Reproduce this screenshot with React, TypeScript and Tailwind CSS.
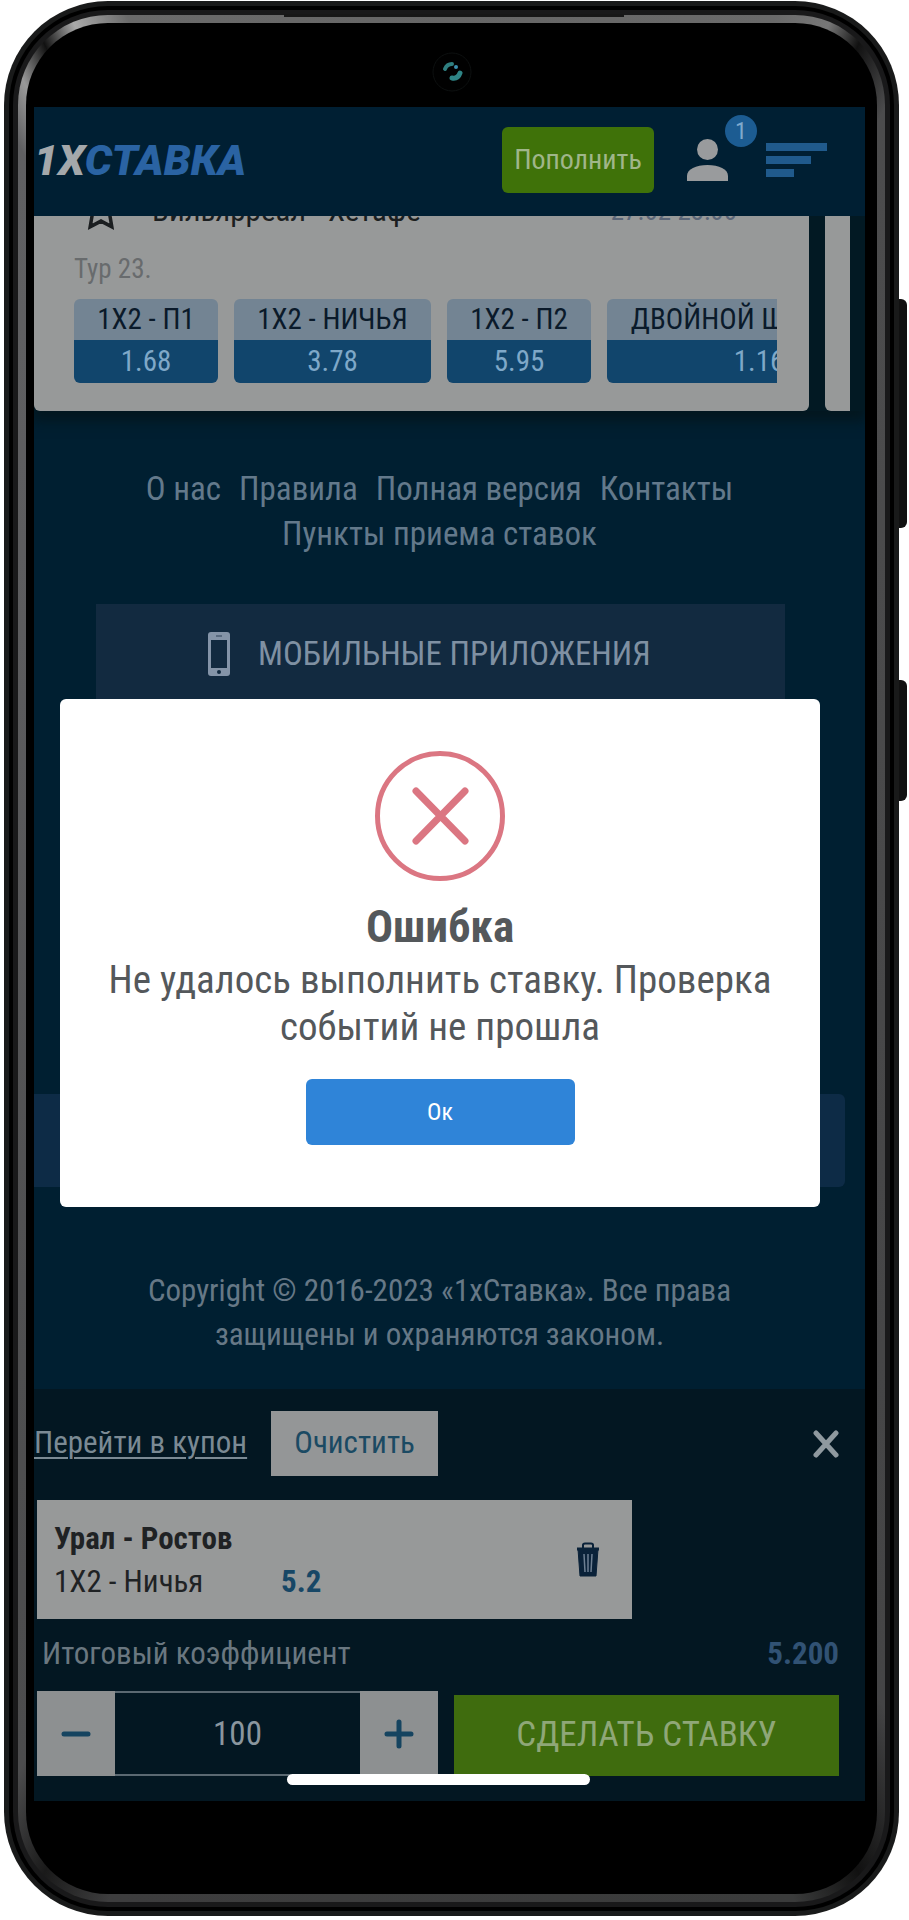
import type { ReactNode } from 'react';

interface Odd {
  label: string;
  value: string;
  className: string;
}

const ODDS: Odd[] = [
  { label: '1X2 - П1', value: '1.68', className: 'w-36' },
  { label: '1X2 - НИЧЬЯ', value: '3.78', className: 'w-[197px]' },
  { label: '1X2 - П2', value: '5.95', className: 'w-36' },
  { label: 'ДВОЙНОЙ ШАНС - 1X', value: '1.16', className: 'w-[304px]' },
];

const LINKS = ['О нас', 'Правила', 'Полная версия', 'Контакты', 'Пункты приема ставок'];

function Phone({ children }: { children: ReactNode }) {
  return (
    <div className="relative pl-1 pr-[10px] pt-px pb-[2px]">
      <div className="absolute right-[2px] top-[299px] h-[229px] w-4 rounded-r-md bg-[#111111]" />
      <div className="absolute right-[2px] top-[680px] h-[121px] w-4 rounded-r-md bg-[#111111]" />
      <div className="relative rounded-[104px] bg-[#191a1a] p-[5px]">
        <div className="rounded-[99px] bg-black p-1">
          <div className="rounded-[95px] bg-[#19191a] p-[5px]">
            <div className="rounded-[90px] bg-[conic-gradient(#666_0deg,#6a6a6a_19deg,#777_22deg,#111_24deg,#4c4c4d_27deg,#454546_150deg,#111_156deg,#3a3b3b_160deg,#3d3d3e_200deg,#1a1a1a_204deg,#4c4c4d_208deg,#606062_332deg,#999_334deg,#111_336deg,#aaa_338deg,#6a6a6a_341deg,#666_360deg)] p-2">
              <div className="rounded-[82px] bg-black pb-[93px] pl-2 pr-3">
                <div className="flex h-[84px] justify-center pl-1 pt-[29px]">
                  <Camera />
                </div>
                {children}
              </div>
            </div>
          </div>
        </div>
      </div>
      <div className="absolute left-[284px] top-[14px] h-[3px] w-[340px] bg-[#171717]" />
    </div>
  );
}

function Camera() {
  return (
    <svg width="40" height="40" viewBox="0 0 40 40">
      <circle cx="20" cy="20" r="19" fill="#010101" stroke="#0d1010" />
      <path d="M13 17q2-5 7-5" fill="none" stroke="#2f7f80" strokeWidth="4" strokeLinecap="round" />
      <path d="M20 26q6 1 8-5" fill="none" stroke="#2f8586" strokeWidth="5" strokeLinecap="round" />
      <circle cx="24" cy="15" r="2" fill="#3c8fae" />
    </svg>
  );
}

function Header() {
  return (
    <header className="relative flex h-[109px] items-center bg-[#001f33] pb-[3px] pr-[38px]">
      <a href="#" className="font-[Roboto] text-[43px] font-black italic leading-none text-[#2a63a3]">
        <span className="text-[#a4a8ab]">1X</span>СТАВКА
      </a>
      <button className="ml-auto h-[66px] w-[152px] rounded-md bg-[#3f7209] text-[28px] text-[#a0b68a]">
        Пополнить
      </button>
      <button aria-label="Профиль" className="relative ml-[33px]">
        <svg width="41" height="42" viewBox="0 0 41 42" fill="#999b9d">
          <circle cx="20.500" cy="10.500" r="10.500" />
          <path d="M0 42V37C0 30 9 26 20.500 26S41 30 41 37V42z" />
        </svg>
        <span className="absolute -top-6 left-[38px] flex h-8 w-8 items-center justify-center rounded-full bg-[#1c5c92] text-2xl text-[#7fa9cd]">
          1
        </span>
      </button>
      <button aria-label="Меню" className="ml-[38px] flex flex-col gap-[5px]">
        <span className="h-2 w-[61px] bg-[#205a8c]" />
        <span className="h-2 w-[45px] bg-[#205a8c]" />
        <span className="h-2 w-7 bg-[#205a8c]" />
      </button>
    </header>
  );
}

function Matches() {
  return (
    <section className="flex h-[195px] gap-4 overflow-hidden bg-[#021923] pr-[15px] shadow-[0_8px_12px_2px_#03171f]">
      <div className="flex min-w-0 flex-1 flex-col overflow-hidden rounded-b-md bg-[#979999] pl-10 pr-8">
        {/* this row is scrolled halfway under the header */}
        <div className="-mt-[26px] flex h-[42px] shrink-0 items-center leading-[42px] text-[#1b1e20]">
          <svg width="42" height="42" viewBox="0 0 24 24" className="ml-[6px]" fill="none" stroke="#1b1e20" strokeWidth="2">
            <path d="M12 2l3.090 6.260L22 9.270l-5 4.870 1.180 6.880L12 17.770l-6.180 3.250L7 14.140 2 9.270l6.910-1.010z" />
          </svg>
          <span className="ml-[30px] text-[31px]">Вильярреал - Хетафе</span>
          <span className="ml-auto mr-10 text-[27px] text-[#5b6678]">27.02 23:00</span>
        </div>
        <p className="mt-3 text-[27px] leading-[50px] text-[#686b6d]">Тур 23.</p>
        <div className="mt-[5px] flex gap-4 overflow-hidden text-center">
          {ODDS.map(odd => (
            <button key={odd.label} className={`shrink-0 overflow-hidden rounded-md ${odd.className}`}>
              <span className="block bg-[#738493] text-[29px] leading-[41px] text-[#0a1a2a]">{odd.label}</span>
              <span className="block bg-[#11456c] text-[29px] leading-[43px] text-[#7fa8c8]">{odd.value}</span>
            </button>
          ))}
        </div>
      </div>
      <div className="w-[25px] rounded-bl-md bg-[#979999]" />
    </section>
  );
}

function Footer() {
  return (
    <footer className="mr-5 text-center text-[#63798b]">
      <nav className="flex flex-wrap justify-center gap-x-[18px] px-20 pt-[55px] text-[33px] leading-[45px]">
        {LINKS.map(link => (
          <a key={link} href="#">
            {link}
          </a>
        ))}
      </nav>
      <a
        href="#"
        className="ml-[62px] mr-[60px] mt-12 flex h-24 items-center gap-7 bg-[#122a40] pl-28 pt-1 text-[33px] text-[#7f90a2]"
      >
        <svg width="22" height="44" viewBox="0 0 22 44">
          <rect width="22" height="44" rx="3" fill="#8494a8" />
          <rect x="3" y="8" width="16" height="28" fill="#122a40" />
          <path d="M8 4H14" stroke="#4a5d72" strokeWidth="1.500" />
          <circle cx="11" cy="40" r="2" fill="#122a40" />
        </svg>
        МОБИЛЬНЫЕ ПРИЛОЖЕНИЯ
      </a>
      <div className="mt-[394px] h-[93px] rounded-r-md bg-[#0d2b46]" />
      <p className="mt-[82px] px-24 text-[31px] leading-[44px] text-[#667886]">
        Copyright © 2016-2023 «1хСтавка». Все права защищены и охраняются законом.
      </p>
    </footer>
  );
}

function Coupon() {
  return (
    <section className="mt-8 bg-[#031722] pb-[25px] pr-[26px] pt-[22px]">
      <div className="flex items-center">
        <a href="#" className="text-[31px] text-[#7b8a94] underline decoration-2 underline-offset-4">
          Перейти в купон
        </a>
        <button className="ml-6 h-[65px] w-[167px] bg-[#949697] text-[31px] text-[#1b4a63]">Очистить</button>
        <button aria-label="Закрыть" className="ml-auto">
          <svg width="26" height="28" viewBox="0 0 26 28" stroke="#8f999f" strokeWidth="5" strokeLinecap="round">
            <path d="M3 3L23 25M23 3L3 25" />
          </svg>
        </button>
      </div>
      <div className="ml-[3px] mt-6 flex h-[119px] w-[595px] items-center bg-[#979999] pl-[17px] pr-8">
        <div className="text-[31px] leading-[43px] text-[#1f2224]">
          <p className="font-bold">Урал - Ростов</p>
          <p className="flex">
            <span className="w-[227px]">1X2 - Ничья</span>
            <span className="font-bold text-[#174766]">5.2</span>
          </p>
        </div>
        <button aria-label="Удалить" className="ml-auto">
          <svg width="24" height="36" viewBox="0 0 24 36" fill="none" stroke="#0a2239">
            <path d="M7 6V3Q7 1.500 9 1.500H15Q17 1.500 17 3V6" strokeWidth="2" />
            <path d="M1 7H23" strokeWidth="3" />
            <path d="M2 7H22L20 34H4z" fill="#0a2239" />
            <path d="M8 12L9 30M12 12V30M16 12L15 30" stroke="#6d7f92" strokeWidth="1.500" />
          </svg>
        </button>
      </div>
      <div className="flex justify-between pl-2 pt-[15px] text-[31px] leading-[40px] text-[#6a7780]">
        <span>Итоговый коэффициент</span>
        <span className="font-bold text-[#315274]">5.200</span>
      </div>
      <div className="ml-[3px] mt-[17px] flex h-[85px]">
        <button aria-label="Уменьшить" className="flex w-[78px] items-center justify-center bg-[#8d9091]">
          <svg width="30" height="30" viewBox="0 0 30 30" stroke="#154460" strokeWidth="5" strokeLinecap="round">
            <path d="M3 15H27" />
          </svg>
        </button>
        <input
          aria-label="Сумма ставки"
          defaultValue="100"
          className="w-[245px] border-y-2 border-[#5b6972] bg-[#031722] text-center text-[33px] text-[#8a969e] outline-none"
        />
        <button aria-label="Увеличить" className="flex w-[78px] items-center justify-center bg-[#8d9091]">
          <svg width="30" height="30" viewBox="0 0 30 30" stroke="#154460" strokeWidth="5" strokeLinecap="round">
            <path d="M3 15H27M15 3V27" />
          </svg>
        </button>
        <button className="ml-4 mt-1 flex-1 bg-[#3f6c0e] text-[35px] text-[#8fa778]">СДЕЛАТЬ СТАВКУ</button>
      </div>
    </section>
  );
}

function ErrorDialog() {
  return (
    <div
      role="dialog"
      aria-labelledby="error-title"
      className="absolute left-[26px] right-[45px] top-[592px] flex h-[508px] flex-col items-center rounded-md bg-white pt-[52px] text-center text-[#54585b]"
    >
      <svg width="130" height="130" viewBox="0 0 130 130" fill="none" stroke="#db7682" strokeLinecap="round">
        <circle cx="65" cy="65" r="62.500" strokeWidth="5" />
        <path d="M41 40L90 90M90 40L41 90" strokeWidth="7" />
      </svg>
      <h2 id="error-title" className="mt-5 text-[45px] font-bold leading-[52px]">
        Ошибка
      </h2>
      <p className="mt-1 px-8 text-[39px] leading-[47px]">
        Не удалось выполнить ставку. Проверка событий не прошла
      </p>
      <button className="mt-[28px] h-[66px] w-[269px] rounded-md bg-[#2f84d8] text-[24px] text-white">Ок</button>
    </div>
  );
}

export default function App() {
  return (
    <div className="bg-white font-['Roboto_Condensed','Liberation_Sans_Narrow',Roboto,sans-serif]">
      <Phone>
        <main className="relative overflow-hidden bg-[#001f31]">
          <Header />
          <Matches />
          <Footer />
          <Coupon />
          <ErrorDialog />
          <div className="absolute bottom-4 left-[253px] h-[11px] w-[303px] rounded-full bg-white" />
        </main>
      </Phone>
    </div>
  );
}
